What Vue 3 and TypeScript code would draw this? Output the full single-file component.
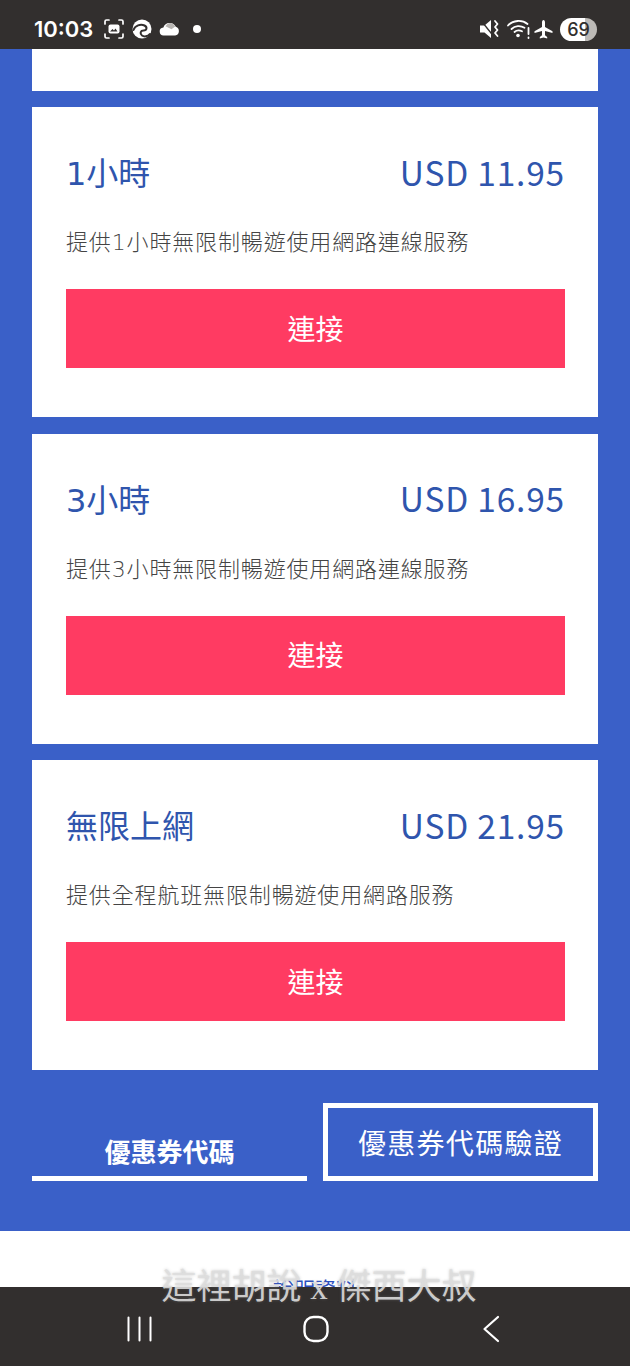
<template>
  <div class="phone">
    <!-- status bar -->
    <div class="status-bar">
      <div class="status-left">
        <span class="clock">10:03</span>
        <svg class="ic" width="22" height="22" viewBox="0 0 22 22" fill="none" stroke="#fff" stroke-width="1.7" stroke-linecap="round">
          <path d="M2 6V3.500A1.500 1.500 0 0 1 3.500 2H6M16 2h2.500A1.500 1.500 0 0 1 20 3.500V6M20 16v2.500a1.500 1.500 0 0 1-1.500 1.500H16M6 20H3.500A1.500 1.500 0 0 1 2 18.500V16" />
          <rect x="5.500" y="6.500" width="11" height="9" rx="2" fill="#fff" stroke="none" />
          <path d="M7 13.500l2.500-2.500 1.500 1.500 1.500-2 2 3z" fill="#322f2e" stroke="none" />
        </svg>
        <svg class="ic" width="20" height="20" viewBox="0 0 20 20">
          <circle cx="10" cy="10" r="9.500" fill="#fff" />
          <path d="M1.500 11C3 6.500 8.500 4.500 12.500 6.500C15.500 8 15 11.500 11.500 11.500C8.500 11.500 7.500 14.500 10 16.500C12 18 15.500 17.800 18 15" fill="none" stroke="#322f2e" stroke-width="2" stroke-linecap="round" />
        </svg>
        <svg class="ic" width="22" height="14" viewBox="0 0 22 14">
          <path d="M5 13.500a4 4 0 0 1-.6-8A6.500 6.500 0 0 1 11 1c2.500 0 4.700 1.500 5.800 3.800a4.500 4.500 0 0 1-.6 8.700z" fill="#fff" />
          <path d="M6.500 4.300A6 6 0 0 1 11 1c2.200 0 4.200 1.400 5.200 3.500l-3.700 2.700z" fill="#b9b6b3" />
        </svg>
        <span class="dot"></span>
      </div>
      <div class="status-right">
        <svg class="ic" width="19" height="20" viewBox="0 0 19 20" fill="none">
          <path d="M0 6.500h4.500L11 1v18l-6.500-5.500H0z" fill="#fff" />
          <path d="M1 1.500l12 15" stroke="#322f2e" stroke-width="1.300" />
          <path d="M15 2l2.500 3-2.500 3 2.500 3-2.500 3 2.500 3" stroke="#fff" stroke-width="1.800" stroke-linecap="round" stroke-linejoin="round" />
        </svg>
        <svg class="ic wifi" width="24" height="20" viewBox="0 0 24 20" fill="none" stroke="#fff" stroke-width="1.800" stroke-linecap="round">
          <path d="M1 6.500C6 1 15 .5 20.500 5" />
          <path d="M4.500 10c3.500-3.500 9-3.800 13-1.200" />
          <path d="M7.500 13c2-1.800 5-2 7.500-.7" />
          <circle cx="11" cy="16.500" r="1.800" fill="#fff" stroke="none" />
          <path d="M21.500 9v6M21.500 18.500v.5" />
        </svg>
        <svg class="ic plane" width="19" height="19" viewBox="0 0 19 19" fill="#fff">
          <path d="M9.500 0c.9 0 1.500 1 1.500 2.500V7l7.500 4.200V13L11 11v4.200l2.200 1.700V18.500l-3.700-1-3.700 1v-1.600L8 15.200V11l-7.500 2v-1.800L8 7V2.500C8 1 8.600 0 9.500 0z" />
        </svg>
        <span class="battery">69</span>
      </div>
    </div>

    <!-- page -->
    <div class="page">
      <div class="blue-area">
        <div class="card-tail"></div>
        <div v-for="plan in plans" :key="plan.name" class="card">
          <div class="card-head">
            <span class="plan-name">{{ plan.name }}</span>
            <span class="plan-price">{{ plan.price }}</span>
          </div>
          <p class="plan-desc">{{ plan.desc }}</p>
          <button class="connect-btn">連接</button>
        </div>
        <div class="coupon-row">
          <div class="coupon-input">優惠券代碼</div>
          <button class="coupon-btn">優惠券代碼驗證</button>
        </div>
      </div>
      <div class="footer-area">
        <span class="footer-link">說明資料</span>
      </div>
    </div>

    <!-- nav bar -->
    <div class="nav-bar">
      <svg width="26" height="26" viewBox="0 0 26 26" fill="none" stroke="#fff" stroke-width="2" stroke-linecap="round">
        <path d="M2.500 1.500v23M13.500 1.500v23M24.500 1.500v23" />
      </svg>
      <svg width="28" height="28" viewBox="0 0 28 28" fill="none" stroke="#fff" stroke-width="2.400">
        <rect x="2.500" y="2" width="23" height="24" rx="9" />
      </svg>
      <svg width="20" height="28" viewBox="0 0 20 28" fill="none" stroke="#fff" stroke-width="2.200" stroke-linecap="round" stroke-linejoin="round">
        <path d="M18 2L4.500 14 18 26" />
      </svg>
    </div>

    <div class="watermark">這裡胡說 x 傑西大叔</div>
  </div>
</template>

<script setup lang="ts">
interface Plan {
  name: string
  price: string
  desc: string
}

const plans: Plan[] = [
  { name: '1小時', price: 'USD 11.95', desc: '提供1小時無限制暢遊使用網路連線服務' },
  { name: '3小時', price: 'USD 16.95', desc: '提供3小時無限制暢遊使用網路連線服務' },
  { name: '無限上網', price: 'USD 21.95', desc: '提供全程航班無限制暢遊使用網路服務' }
]
</script>

<style>
html,
body {
  margin: 0;
  padding: 0;
}
</style>

<style scoped>
.phone {
  position: relative;
  width: 630px;
  height: 1366px;
  display: flex;
  flex-direction: column;
  overflow: hidden;
  font-family: "Noto Sans CJK TC", "Noto Sans", sans-serif;
  background: #fff;
}

.status-bar {
  flex: none;
  height: 49px;
  padding: 9px 33px 0 34px;
  display: flex;
  justify-content: space-between;
  align-items: center;
  background: #322f2e;
  color: #fff;
  box-sizing: border-box;
}

.status-left,
.status-right {
  display: flex;
  align-items: center;
}

.clock {
  font-family: Inter, "Liberation Sans", sans-serif;
  font-size: 22px;
  font-weight: 600;
  margin-right: 10px;
}

.ic {
  display: block;
  margin-right: 7px;
}

.dot {
  width: 8px;
  height: 8px;
  margin-left: 5px;
  border-radius: 50%;
  background: #fff;
}

.status-right .ic {
  margin-right: 0;
}

.status-right .wifi {
  margin-left: 8px;
}

.status-right .plane {
  margin: 0 7px 0 3px;
}

.battery {
  width: 37px;
  height: 23px;
  border-radius: 12px;
  background: linear-gradient(90deg, #fff 68%, #bdbab7 68%);
  color: #322f2e;
  font-family: Inter, "Liberation Sans", sans-serif;
  font-size: 18px;
  font-weight: 500;
  line-height: 23px;
  text-align: center;
}

.page {
  flex: 1;
  min-height: 0;
  overflow: hidden;
}

.blue-area {
  height: 1182px;
  padding: 0 32px;
  background: #3a60c8;
  box-sizing: border-box;
}

.card-tail {
  height: 42px;
  margin-bottom: 16px;
  background: #fff;
}

.card {
  height: 310px;
  margin-bottom: 16.5px;
  padding: 38px 33px 0 34px;
  background: #fff;
  box-sizing: border-box;
  font-family: "DejaVu Sans", "Noto Sans CJK TC", sans-serif;
}

.card-head {
  display: flex;
  justify-content: space-between;
  align-items: center;
  height: 52px;
  color: #2f55ad;
  font-size: 32px;
  font-weight: 400;
}

.plan-price {
  font-family: "Noto Sans CJK TC", sans-serif;
  font-size: 33.5px;
  letter-spacing: 0.8px;
}

.plan-desc {
  margin: 28px 0 0;
  height: 36px;
  font-size: 22px;
  font-weight: 300;
  letter-spacing: 0.85px;
  line-height: 36px;
  color: #444;
  white-space: nowrap;
}

.connect-btn {
  display: block;
  width: 100%;
  height: 79px;
  margin-top: 28px;
  padding: 0 0 2px;
  border: 0;
  background: #ff3b62;
  color: #fff;
  font-family: "Noto Sans CJK TC", sans-serif;
  font-size: 28px;
  font-weight: 400;
}

.coupon-row {
  display: flex;
  justify-content: space-between;
  align-items: flex-end;
  margin-top: 33px;
}

.coupon-input {
  width: 275px;
  padding-bottom: 7px;
  border-bottom: 5px solid #fff;
  color: #fff;
  font-size: 26px;
  font-weight: 700;
  line-height: 36px;
  text-align: center;
}

.coupon-btn {
  width: 275px;
  height: 78px;
  padding: 0;
  border: 5px solid #fff;
  background: #3a60c8;
  color: #fff;
  font-family: inherit;
  font-size: 28px;
  font-weight: 400;
  letter-spacing: 1.3px;
}

.footer-area {
  padding-top: 41px;
  text-align: center;
}

.footer-link {
  color: #2b4fc0;
  font-size: 21px;
  line-height: 32px;
}

.nav-bar {
  flex: none;
  height: 79px;
  padding: 5px 0 0 126px;
  display: flex;
  gap: 150px;
  align-items: center;
  background: #322f2e;
  box-sizing: border-box;
  position: relative;
}

.watermark {
  position: absolute;
  left: 8px;
  right: 0;
  top: 1263px;
  text-align: center;
  font-family: "Liberation Serif", "Noto Sans CJK TC", serif;
  font-size: 35px;
  font-weight: 400;
  line-height: 50px;
  color: rgba(222, 222, 222, 0.9);
  text-shadow: 0 0 3px rgba(130, 130, 130, 0.45);
  white-space: nowrap;
}
</style>
